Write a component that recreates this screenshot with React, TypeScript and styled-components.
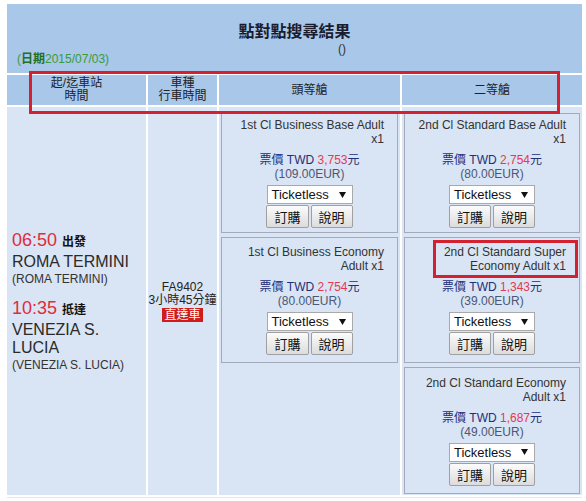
import * as React from 'react';
import styled, { createGlobalStyle } from 'styled-components';

type Fare = {
  title: string;
  twd: string;
  eur: string;
};

const firstClass: Fare[] = [
  { title: '1st Cl Business Base Adult x1', twd: '3,753', eur: '109.00' },
  { title: '1st Cl Business Economy Adult x1', twd: '2,754', eur: '80.00' },
];

const secondClass: Fare[] = [
  { title: '2nd Cl Standard Base Adult x1', twd: '2,754', eur: '80.00' },
  { title: '2nd Cl Standard Super Economy Adult x1', twd: '1,343', eur: '39.00' },
  { title: '2nd Cl Standard Economy Adult x1', twd: '1,687', eur: '49.00' },
];

const GlobalStyle = createGlobalStyle`
  html, body {
    margin: 0;
    padding: 0;
    background: #fff;
  }
  body {
    font-family: "Liberation Sans", "Noto Sans CJK TC", sans-serif;
    font-size: 12px;
    color: #222;
  }
`;

const Page = styled.div`
  position: relative;
  width: 586px;
  height: 501px;
  padding: 4px 0 0 7px;
  box-sizing: border-box;
  overflow: hidden;
`;

const Table = styled.div`
  width: 575px;
  display: grid;
  grid-template-columns: 139px 69px 181px 180px;
  gap: 2px;
`;

const Caption = styled.div`
  grid-column: 1 / -1;
  background: #a8c7e9;
  padding: 18px 0 8px;
  display: flex;
  flex-direction: column;
`;

const Title = styled.div`
  text-align: center;
  font-size: 16px;
  font-weight: bold;
  line-height: 20px;
  color: #1a1c2e;
`;

const Parens = styled.div`
  text-align: center;
  padding-left: 95px;
  margin-top: 3px;
  line-height: 8px;
  color: #333;
`;

const DateLine = styled.div`
  padding-left: 10px;
  line-height: 12px;
  color: #3b9a3b;

  b {
    color: #1f6f1f;
  }
`;

const HeadCell = styled.div`
  background: #a8c7e9;
  height: 30px;
  display: flex;
  flex-direction: column;
  align-items: center;
  justify-content: center;
  text-align: center;
  line-height: 13px;
  color: #222;
`;

const BodyCell = styled.div`
  background: #d9e4f4;
  height: 388px;
  box-sizing: border-box;
`;

const StationCell = styled(BodyCell)`
  display: flex;
  flex-direction: column;
  justify-content: center;
  padding-left: 5px;
`;

const Stop = styled.div<{ $last?: boolean }>`
  margin-bottom: ${(p) => (p.$last ? '0' : '10px')};
`;

const Time = styled.div`
  font-size: 18px;
  line-height: 22px;
  color: #e02c3c;

  b {
    font-size: 12px;
    color: #111;
    margin-left: 5px;
  }
`;

const Station = styled.div`
  font-size: 16px;
  line-height: 18px;
  color: #2a2a2a;
`;

const StationSub = styled.div`
  font-size: 12px;
  line-height: 16px;
  color: #333;
`;

const TrainCell = styled(BodyCell)`
  display: flex;
  flex-direction: column;
  align-items: center;
  justify-content: center;
  line-height: 13px;
  color: #222;
`;

const Direct = styled.span`
  display: inline-block;
  margin-top: 1px;
  padding: 0 2.5px;
  line-height: 14px;
  background: #cf1d1d;
  color: #fff;
`;

const FareColumn = styled(BodyCell)`
  display: grid;
  grid-template-rows: 120px 126px 127px;
  row-gap: 4px;
  padding: 6px 2px 1px;
`;

const FareBox = styled.div`
  border: 1px solid #a3abba;
  background: #d9e4f4;
  display: flex;
  flex-direction: column;
  align-items: center;
  justify-content: center;
`;

const FareTitle = styled.div`
  align-self: stretch;
  text-align: right;
  padding: 0 13px 0 6px;
  line-height: 14px;
  color: #333;
`;

const Price = styled.div`
  margin-top: 7px;
  line-height: 14px;
  color: #1f2f78;

  em {
    font-style: normal;
    color: #e63950;
  }
`;

const Eur = styled.div`
  line-height: 14px;
  color: #4a5775;
`;

const Select = styled.div`
  margin-top: 4px;
  width: 86px;
  height: 19px;
  box-sizing: border-box;
  border: 1px solid #a9a9a9;
  background: #fff;
  display: flex;
  align-items: center;
  justify-content: space-between;
  padding: 0 6px 0 4px;
  font-size: 13px;
  color: #111;
`;

const Buttons = styled.div`
  margin-top: 1px;
  display: flex;
  gap: 2px;
`;

const Button = styled.button`
  height: 23px;
  padding: 0 7px;
  font-family: inherit;
  font-size: 13px;
  color: #111;
  border: 1px solid #a0a0a0;
  border-radius: 2px;
  background: linear-gradient(#fbfbfb, #dcdcdc);
`;

const BottomRule = styled.div`
  grid-column: 1 / -1;
  height: 1px;
  background: #e2e8f0;
`;

const Mark = styled.div<{ $x: number; $y: number; $w: number; $h: number }>`
  position: absolute;
  left: ${(p) => p.$x}px;
  top: ${(p) => p.$y}px;
  width: ${(p) => p.$w}px;
  height: ${(p) => p.$h}px;
  box-sizing: border-box;
  border: 3px solid #d3212f;
  pointer-events: none;
`;

const FareCard = ({ fare }: { fare: Fare }) => (
  <FareBox>
    <FareTitle>{fare.title}</FareTitle>
    <Price>
      票價 TWD <em>{fare.twd}</em>元
    </Price>
    <Eur>({fare.eur}EUR)</Eur>
    <Select>
      <span>Ticketless</span>
      <svg width="7" height="6" viewBox="0 0 7 6">
        <path d="M0 0h7L3.5 6z" fill="#111" />
      </svg>
    </Select>
    <Buttons>
      <Button>訂購</Button>
      <Button>說明</Button>
    </Buttons>
  </FareBox>
);

export default function App() {
  return (
    <Page>
      <GlobalStyle />
      <Table>
        <Caption>
          <Title>點對點搜尋結果</Title>
          <Parens>()</Parens>
          <DateLine>
            (<b>日期</b>2015/07/03)
          </DateLine>
        </Caption>

        <HeadCell>
          <span>起/迄車站</span>
          <span>時間</span>
        </HeadCell>
        <HeadCell>
          <span>車種</span>
          <span>行車時間</span>
        </HeadCell>
        <HeadCell>頭等艙</HeadCell>
        <HeadCell>二等艙</HeadCell>

        <StationCell>
          <Stop>
            <Time>
              06:50<b>出發</b>
            </Time>
            <Station>ROMA TERMINI</Station>
            <StationSub>(ROMA TERMINI)</StationSub>
          </Stop>
          <Stop $last>
            <Time>
              10:35<b>抵達</b>
            </Time>
            <Station>VENEZIA S. LUCIA</Station>
            <StationSub>(VENEZIA S. LUCIA)</StationSub>
          </Stop>
        </StationCell>
        <TrainCell>
          <span>FA9402</span>
          <span>3小時45分鐘</span>
          <Direct>直達車</Direct>
        </TrainCell>
        <FareColumn>
          {firstClass.map((f) => (
            <FareCard key={f.title} fare={f} />
          ))}
        </FareColumn>
        <FareColumn>
          {secondClass.map((f) => (
            <FareCard key={f.title} fare={f} />
          ))}
        </FareColumn>

        <BottomRule />
      </Table>

      <Mark $x={29} $y={71} $w={531} $h={43} />
      <Mark $x={433} $y={240} $w={145} $h={38} />
    </Page>
  );
}
